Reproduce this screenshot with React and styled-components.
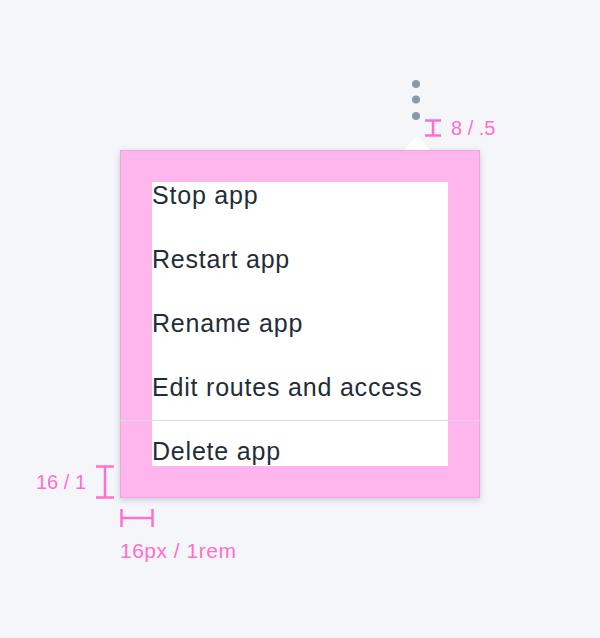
import React from "react";
import styled, { createGlobalStyle } from "styled-components";

const GlobalStyle = createGlobalStyle`
  html, body {
    margin: 0;
    background: #f5f6fa;
    font-family: "Liberation Sans", Arial, sans-serif;
  }
`;

const items = ["Stop app", "Restart app", "Rename app", "Edit routes and access"];

const Stage = styled.div`
  width: 600px;
  height: 638px;
  padding: 80px 0 0 120px;
  box-sizing: border-box;
`;

const Trigger = styled.div`
  position: relative;
  width: 360px;
  height: 56px;
  margin-bottom: 14px;
`;

const Kebab = styled.svg`
  position: absolute;
  left: 292px;
  top: 0;
`;

const Menu = styled.div`
  position: relative;
  width: 360px;
  box-sizing: border-box;
  padding: 31px;
  background: #ffb6ec;
  border: 1px solid #f1a3dc;
  box-shadow: 0 2px 6px rgba(60, 70, 90, 0.25);
`;

const Caret = styled.div`
  position: absolute;
  top: -15px;
  left: 283px;
  width: 0;
  height: 0;
  border-left: 13px solid transparent;
  border-right: 13px solid transparent;
  border-bottom: 14px solid #ffffff;
`;

const Content = styled.ul`
  list-style: none;
  margin: 0;
  padding: 0;
  background: #ffffff;
  display: flex;
  flex-direction: column;
  gap: 36px;
`;

const Item = styled.li`
  font-size: 25px;
  letter-spacing: 0.8px;
  line-height: 27px;
  padding-bottom: 1px;
  color: #1f2d38;
  white-space: nowrap;
`;

const Divider = styled.li`
  height: 1px;
  background: #d9dde3;
  margin: -18px -32px -19px;
`;

const Note = styled.div`
  position: absolute;
  color: #ff6fcb;
  font-size: ${(p) => (p.$wide ? "21px" : "20px")};
  letter-spacing: ${(p) => (p.$wide ? "0.5px" : "0")};
  line-height: 20px;
  white-space: nowrap;
  display: flex;
  align-items: center;
  gap: 10px;
`;

const Bracket = styled.svg`
  display: block;
  flex: none;
`;

export default function App() {
  return (
    <>
      <GlobalStyle />
      <Stage>
        <Trigger>
          <Kebab width="10" height="42" viewBox="0 0 10 42">
            <circle cx="4" cy="4" r="4" fill="#8c99a4" />
            <circle cx="4" cy="19.5" r="4" fill="#8c99a4" />
            <circle cx="4" cy="36" r="4" fill="#8c99a4" />
          </Kebab>
          <Note style={{ left: 305, top: 38 }}>
            <Bracket width="16" height="18" viewBox="0 0 16 18">
              <path d="M0 1.5H16M0 16.5H16M8 1.5V16.5" stroke="#ff6fcb" strokeWidth="2.5" fill="none" />
            </Bracket>
            <span>8 / .5</span>
          </Note>
        </Trigger>
        <Menu>
          <Caret />
          <Content>
            {items.map((label) => (
              <Item key={label}>{label}</Item>
            ))}
            <Divider />
            <Item>Delete app</Item>
          </Content>
          <Note style={{ left: -85, top: 314 }}>
            <span>16 / 1</span>
            <Bracket width="18" height="34" viewBox="0 0 18 34">
              <path d="M0 1.5H18M0 32.5H18M9 1.5V32.5" stroke="#ff6fcb" strokeWidth="2.5" fill="none" />
            </Bracket>
          </Note>
          <Note $wide style={{ left: -1, top: 358, flexDirection: "column", alignItems: "flex-start", gap: 14 }}>
            <Bracket width="34" height="18" viewBox="0 0 34 18">
              <path d="M1.5 0V18M32.5 0V18M1.5 9H32.5" stroke="#ff6fcb" strokeWidth="2.5" fill="none" />
            </Bracket>
            <span>16px / 1rem</span>
          </Note>
        </Menu>
      </Stage>
    </>
  );
}
